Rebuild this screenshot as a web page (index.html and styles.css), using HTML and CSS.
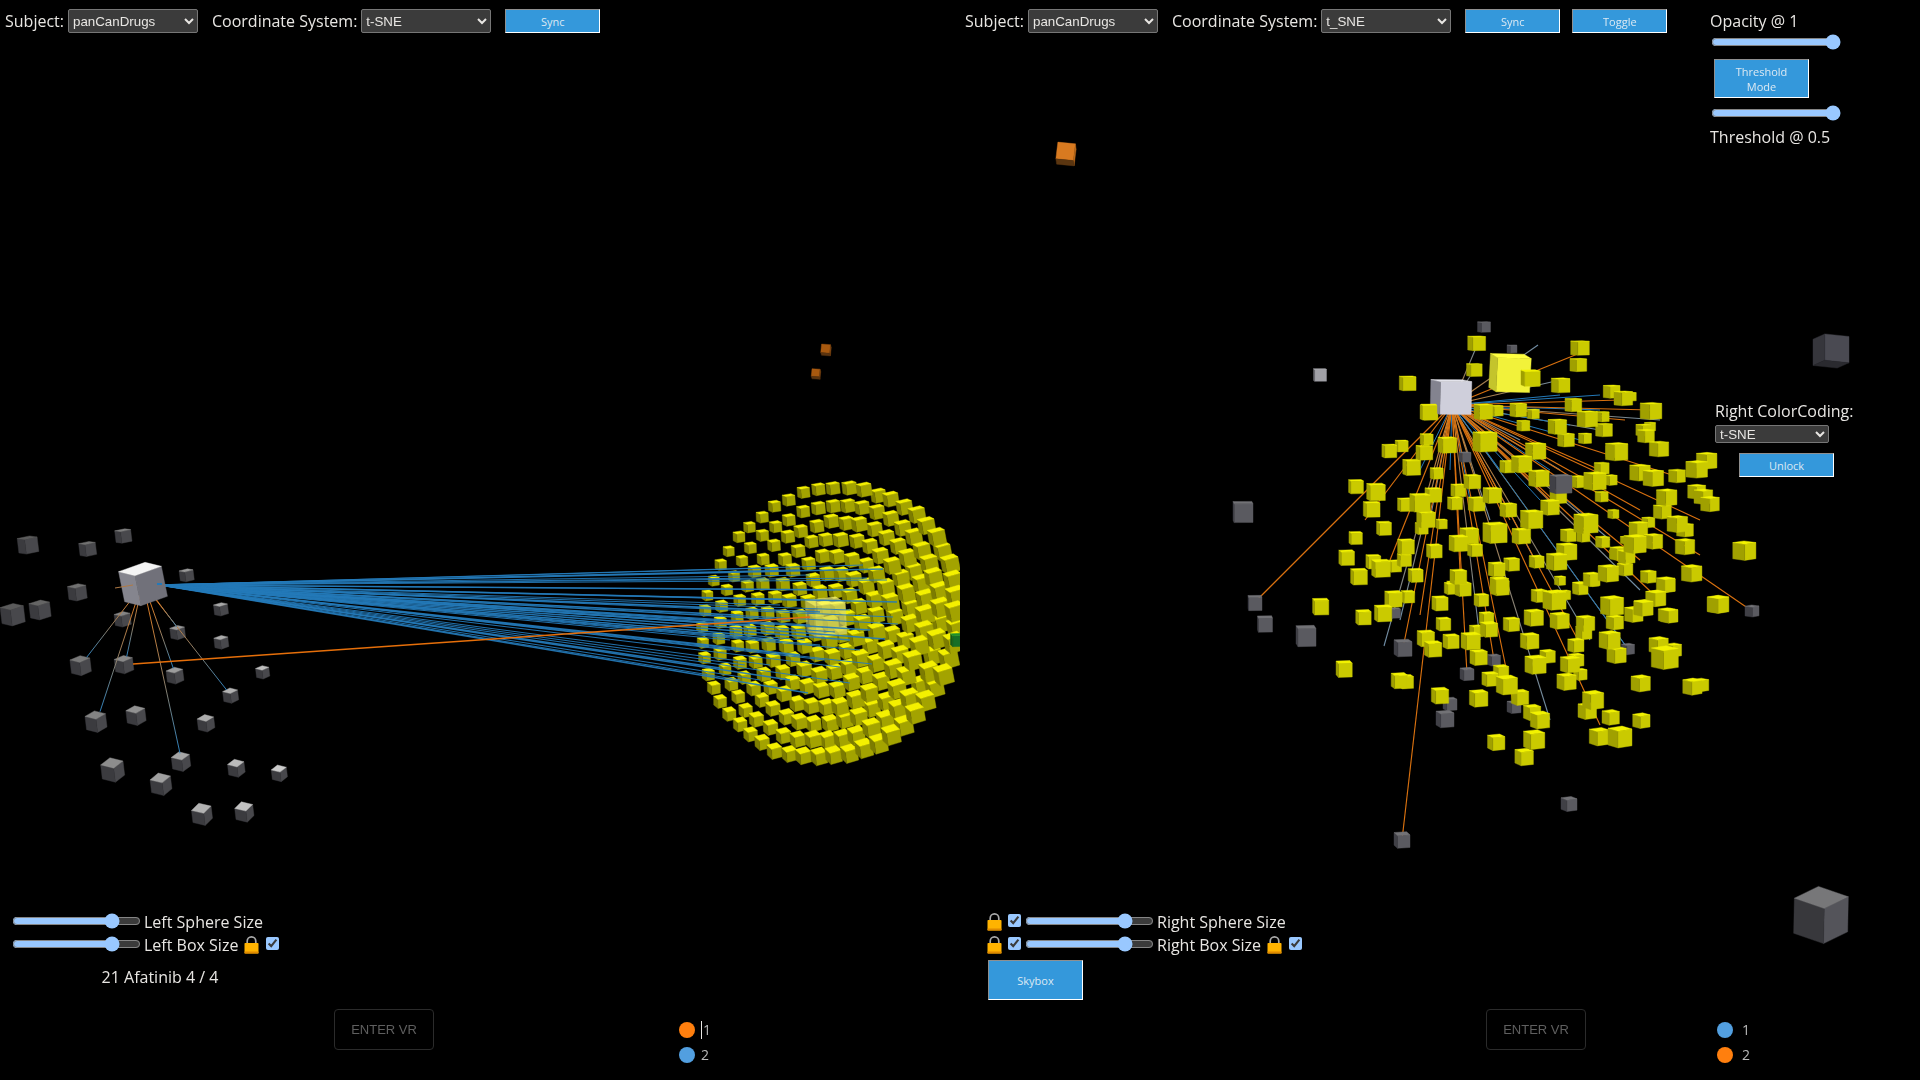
FILE: index.html
```html
<!DOCTYPE html>
<html lang="en">
<head>
<meta charset="utf-8">
<title>Embedding Viewer</title>
<link rel="stylesheet" href="styles.css">
</head>
<body>
<svg class="defs" width="0" height="0" aria-hidden="true">
  <symbol id="lock" viewBox="0 0 15 18">
    <path d="M3.2 8V5.2a4.3 4.3 0 0 1 8.6 0V8" fill="none" stroke="#a9a9a9" stroke-width="1.7"/>
    <rect x="0.5" y="7" width="14" height="10.6" rx="0.8" fill="#ffb300"/>
    <rect x="0.5" y="15.6" width="14" height="2" rx="0.6" fill="#e08a00"/>
  </symbol>
</svg>

<main class="pane pane-left">
  <canvas class="scene" id="sceneLeft" width="960" height="1080"></canvas>
  <div class="topbar">
    <label class="field">Subject:
      <select class="select"><option>panCanDrugs</option></select>
    </label>
    <label class="field">Coordinate System:
      <select class="select"><option>t-SNE</option></select>
    </label>
    <button class="btn">Sync</button>
  </div>
  <div class="bottom bottom-left">
    <div class="size-row"><input class="range" type="range" value="81"><span class="size-label">Left Sphere Size</span></div>
    <div class="size-row"><input class="range" type="range" value="81"><span class="size-label">Left Box Size</span><svg class="lock lock-after"><use href="#lock"/></svg><input class="check" type="checkbox" checked></div>
    <div class="drug">21 Afatinib 4 / 4</div>
  </div>
  <div class="vr vr-left">ENTER VR</div>
  <ul class="legend legend-left">
    <li class="legend-item"><span class="dot dot-orange"></span><span class="caret"></span>1</li>
    <li class="legend-item"><span class="dot dot-blue"></span>2</li>
  </ul>
</main>

<main class="pane pane-right">
  <canvas class="scene" id="sceneRight" width="960" height="1080"></canvas>
  <div class="topbar">
    <label class="field">Subject:
      <select class="select"><option>panCanDrugs</option></select>
    </label>
    <label class="field">Coordinate System:
      <select class="select"><option>t_SNE</option></select>
    </label>
    <button class="btn">Sync</button>
    <button class="btn btn-toggle">Toggle</button>
  </div>
  <aside class="opacity">
    <div class="side-label">Opacity @ 1</div>
    <input class="range range-side" type="range" value="100">
    <button class="btn btn-mode">Threshold Mode</button>
    <input class="range range-side" type="range" value="100">
    <div class="side-label side-threshold">Threshold @ 0.5</div>
  </aside>
  <aside class="coding">
    <div class="side-label">Right ColorCoding:</div>
    <select class="select select-small"><option>t-SNE</option></select>
    <button class="btn btn-unlock">Unlock</button>
  </aside>
  <div class="bottom bottom-right">
    <div class="size-row"><svg class="lock"><use href="#lock"/></svg><input class="check" type="checkbox" checked><input class="range" type="range" value="81"><span class="size-label">Right Sphere Size</span></div>
    <div class="size-row"><svg class="lock"><use href="#lock"/></svg><input class="check" type="checkbox" checked><input class="range" type="range" value="81"><span class="size-label">Right Box Size</span><svg class="lock lock-after"><use href="#lock"/></svg><input class="check" type="checkbox" checked></div>
    <button class="btn btn-skybox">Skybox</button>
  </div>
  <div class="vr vr-right">ENTER VR</div>
  <ul class="legend legend-right">
    <li class="legend-item"><span class="dot dot-blue"></span>1</li>
    <li class="legend-item"><span class="dot dot-orange"></span>2</li>
  </ul>
</main>
<script src="scene.js"></script>
</body>
</html>
```
FILE: styles.css
```css
:root { color-scheme: dark; }
* { box-sizing: border-box; }
html, body { margin: 0; height: 100%; background: #000; }
body {
  display: flex;
  width: 1920px;
  height: 1080px;
  overflow: hidden;
  font-family: "Open Sans", sans-serif;
  font-size: 16px;
  color: #e8e6e3;
}
.defs { position: absolute; }
.pane { position: relative; width: 960px; height: 1080px; overflow: hidden; }
.scene { position: absolute; inset: 0; display: block; }

.topbar {
  position: relative;
  display: flex;
  align-items: center;
  gap: 14px;
  height: 24px;
  margin-top: 9px;
  padding-left: 5px;
}
.field { display: flex; align-items: center; gap: 4px; }
.select {
  width: 130px;
  height: 24px;
  padding: 0;
  background-color: #3b3b3b;
  border: 1px solid #767676;
  border-radius: 2px;
  color: #e8e6e3;
  font-family: "Liberation Sans", sans-serif;
  font-size: 13.33px;
}
.select-small { width: 114px; height: 18px; }
.btn {
  width: 95px;
  height: 24px;
  padding: 0;
  background: #3498db;
  border: 1px solid;
  border-color: #8f8f8f #fff #fff #8f8f8f;
  color: #dce9f3;
  font-family: "Open Sans", sans-serif;
  font-size: 11px;
}
.btn-toggle { margin-left: -2px; }

.opacity {
  position: absolute;
  left: 750px;
  top: 10px;
  display: flex;
  flex-direction: column;
  align-items: flex-start;
}
.side-label { line-height: 22px; }
.range { width: 129px; height: 16px; margin: 2px; }
.range-side { margin: 2px 0 0 1px; width: 130px; }
.btn-mode { width: 95px; height: 39px; margin: 9px 0 0 4px; padding: 0 20px; line-height: 15px; }
.btn-mode + .range-side { margin-top: 7px; }
.side-threshold { margin-top: 5px; }

.coding {
  position: absolute;
  left: 755px;
  top: 400px;
  display: flex;
  flex-direction: column;
  align-items: flex-start;
}
.coding .select-small { margin-top: 3px; }
.btn-unlock { margin: 10px 0 0 24px; }

.bottom { position: absolute; top: 909px; display: flex; flex-direction: column; }
.bottom-left { left: 10px; width: 300px; }
.bottom-right { left: 27px; }
.size-row { display: flex; align-items: center; height: 23px; }
.size-label { line-height: 23px; margin-top: 4px; margin-left: 1px; }
.lock { width: 15px; height: 18px; flex: none; margin-top: 2px; }
.lock-after { margin-left: 6px; }
.check { width: 13px; height: 13px; margin: 0 0 0 7px; }
.lock-after + .check { margin: -1px 0 0 7px; }
.bottom-right .size-row .check:nth-child(2) { margin-top: 0; margin-right: 2px; margin-left: 6px; }
.drug {
  width: 300px;
  margin-top: 11px;
  text-align: center;
  line-height: 22px;
}
.btn-skybox { width: 95px; height: 40px; margin: 5px 0 0 1px; }

.vr {
  position: absolute;
  top: 1009px;
  width: 100px;
  height: 41px;
  display: flex;
  align-items: center;
  justify-content: center;
  border: 1px solid #2b2b2b;
  border-radius: 4px;
  color: #5f5f5f;
  font-family: "Liberation Sans", sans-serif;
  font-size: 13px;
}
.vr-left { left: 334px; }
.vr-right { left: 526px; }

.legend {
  position: absolute;
  top: 1017px;
  margin: 0;
  padding: 0;
  list-style: none;
  color: #b9b9b9;
  font-size: 14px;
}
.legend-left { left: 679px; }
.legend-right { left: 757px; }
.legend-item { display: flex; align-items: center; height: 25px; }
.dot { width: 16px; height: 16px; border-radius: 50%; margin-right: 6px; }
.dot-orange { background: #ff7f0e; }
.dot-blue { background: #529fe0; }
.legend-right .dot { margin-right: 9px; }
.caret { width: 1px; height: 18px; background: #e8e6e3; margin-right: 1px; }
```
FILE: scene.js
```js
(function () {
  function rng(seed) {
    return function () { seed = (seed * 16807) % 2147483647; return seed / 2147483647; };
  }

  function cube(g, x, y, s, o) {
    var a = o.a, p = o.p, r = o.r || 0, c = o.c;
    var ca = Math.cos(a), sa = Math.sin(a), cp = Math.cos(p), sp = Math.sin(p);
    var cr = Math.cos(r), sr = Math.sin(r);
    var k = s / (Math.abs(ca) + Math.abs(sa));
    function pr(X, Y, Z) {
      var x1 = X * ca + Z * sa;
      var z1 = -X * sa + Z * ca;
      var y1 = -Y * cp + z1 * sp;
      return [x + k * (x1 * cr - y1 * sr), y + k * (x1 * sr + y1 * cr)];
    }
    function face(pts, col) {
      g.fillStyle = col;
      g.strokeStyle = col;
      g.lineWidth = 0.4;
      g.beginPath();
      pts.forEach(function (q, i) {
        var v = pr(q[0], q[1], q[2]);
        if (i) g.lineTo(v[0], v[1]); else g.moveTo(v[0], v[1]);
      });
      g.closePath();
      g.fill();
      g.stroke();
    }
    var h = 0.5;
    face([[-h, h, h], [h, h, h], [h, -h, h], [-h, -h, h]], c.front);
    if (a > 0) face([[-h, h, -h], [-h, h, h], [-h, -h, h], [-h, -h, -h]], c.left);
    else face([[h, h, h], [h, h, -h], [h, -h, -h], [h, -h, h]], c.left);
    if (p > 0) face([[-h, h, -h], [h, h, -h], [h, h, h], [-h, h, h]], c.top);
    else face([[-h, -h, h], [h, -h, h], [h, -h, -h], [-h, -h, -h]], c.bottom || c.left);
  }

  function seg(g, x1, y1, x2, y2, w, c1, c2) {
    g.lineWidth = w;
    if (c2) {
      var gr = g.createLinearGradient(x1, y1, x2, y2);
      gr.addColorStop(0, c1);
      gr.addColorStop(0.55, "#8f7f68");
      gr.addColorStop(1, c2);
      g.strokeStyle = gr;
    } else g.strokeStyle = c1;
    g.beginPath();
    g.moveTo(x1, y1);
    g.lineTo(x2, y2);
    g.stroke();
  }

  var BLUE = "#2479b8";

  /* ---------- left scene ---------- */
  (function left() {
    var g = document.getElementById("sceneLeft").getContext("2d");
    var src = [160, 585];

    // gray cubes: x, y, size in 3x crop coordinates
    var grays = [[84,135,60],[263,147,50],[370,108,48],[232,277,55],[38,344,70],[120,330,62],[560,226,42],[368,358,48],
      [533,398,44],[663,328,42],[664,427,42],[242,497,60],[372,494,55],[525,527,50],[692,587,45],[788,517,40],[288,665,62],
      [408,647,57],[618,670,50],[338,810,68],[543,785,55],[483,853,62],[709,805,50],[838,820,46],[606,943,60],[733,936,55]];
    var fan = [[400,255],[260,472],[380,470],[300,635],[520,505],[680,570],[540,760],[530,380]];
    var fanStart = [[400,255],[410,278],[420,283],[415,285],[450,305],[468,300],[438,292],[470,300]];

    grays.forEach(function (q) {
      var x = q[0] / 3, y = q[1] / 3 + 500;
      var t = Math.round(0x52 + q[0] / 840 * 0x68 + (q[1] - 200) / 700 * 0x14);
      var top = "rgb(" + t + "," + t + "," + t + ")";
      cube(g, x, y, q[2] / 3, {
        a: 0.5 + (q[1] - 100) / 1800, p: 0.14 + (q[1] - 100) / 2000, r: -0.12,
        c: { top: top, left: "#3b3b3f", front: "#48484c" }
      });
    });

    fan.forEach(function (q, i) {
      var s = fanStart[i];
      seg(g, s[0] / 3, s[1] / 3 + 500, q[0] / 3, q[1] / 3 + 500, 1, "#e07a1c", "#2c80bd");
    });

    // yellow dome: concentric rings on a tilted oval
    var R = rng(4242), list = [];
    var cx = 830, cy = 623, major = 138, minor = 124, rings = 8;
    for (var k = 0; k <= rings; k++) {
      var n = k === 0 ? 1 : Math.round(k * 6.6);
      var off = R() * 6.28;
      for (var i = 0; i < n; i++) {
        var th = off + i / n * Math.PI * 2;
        var rr = k / rings + (R() - 0.5) * 0.02;
        var cs = Math.cos(th), sn = Math.sin(th);
        var ex = 0.47 * major * rr * sn + 0.88 * minor * rr * cs;
        var ey = -0.88 * major * rr * sn + 0.47 * minor * rr * cs;
        var tx = cx + ex + (R() - 0.5) * 2;
        var ty = cy + ey + (R() - 0.5) * 2;
        var u = ex / 130, v = ey / 140;
        list.push([tx, ty, 15 + 3.6 * u + 1.5 * v + (R() - 0.5), u, v]);
      }
    }
    list.sort(function (m, n2) { return m[2] - n2[2]; });
    list.forEach(function (q) {
      cube(g, q[0], q[1], q[2], {
        a: 0.38 - q[3] * 0.1, p: 0.34 + q[4] * 0.14, r: -0.1 - q[3] * 0.1,
        c: { top: "#f4f000", left: "#7c7c00", front: "#a3a300" }
      });
    });
    cube(g, 957, 640, 13, { a: 0.2, p: 0.2, c: { top: "#1f8f2f", left: "#125a1c", front: "#176f26" } });

    // translucent selected cube
    g.globalAlpha = 0.72;
    cube(g, 826, 617, 40, { a: 0.3, p: 0.2, r: -0.05, c: { top: "#fffb7a", left: "#b9b95c", front: "#d7d76a" } });
    g.globalAlpha = 1;

    // blue fan of edges
    var ends = [[883,569],[863,565],[867,578],[897,602],[893,617],[898,624],[885,639],[872,664],[840,667],[808,693],[850,683],
      [887,580],[860,590],[835,590],[810,575],[800,570],[770,568],[765,578],[800,600],[780,605],[760,610],[820,612],[850,610],
      [740,615],[790,620],[810,625],[835,632],[870,630],[860,650],[820,645],[780,640],[750,635],[730,640],[800,655],[770,665],
      [745,665],[720,668],[730,650],[760,680],[790,680],[740,680],[825,660],[850,640],[805,640],[775,625],[750,625],[735,625]];
    g.globalAlpha = 0.92;
    ends.forEach(function (e, i) {
      seg(g, src[0], src[1], e[0], e[1], i % 3 === 0 ? 1.5 : 1.1, BLUE);
    });
    g.globalAlpha = 1;
    seg(g, 133, 664, 810, 617, 1.3, "#e66f0a");

    // source cube
    cube(g, 143, 584, 43, { a: 0.5, p: 0.26, r: -0.2, c: { top: "#f4f4f4", left: "#85858e", front: "#71717a" } });
    seg(g, 133, 585, 115, 588, 1, "#b07a45");
    seg(g, 157, 584, 162, 584, 2, BLUE);

    // far orange cubes
    var dim = { a: -0.12, p: -0.3, r: 0.1, c: { front: "#a8590f", left: "#7c4410", bottom: "#5b3410" } };
    cube(g, 826, 350, 10, dim);
    cube(g, 816, 374, 9, dim);
  })();

  /* ---------- right scene (pane coordinates = page x - 960) ---------- */
  (function right() {
    var g = document.getElementById("sceneRight").getContext("2d");
    var YEL = { top: "#f2f200", left: "#a0a000", front: "#caca00" };
    var GRY = { top: "#727276", left: "#404046", front: "#5a5a60" };
    var O = 960;
    var sx = 1452 - O, sy = 405;

    var orange = [[1255,602],[1402,840],[1403,648],[1467,674],[1494,660],[1514,707],[1752,611],[1580,353],[1620,400],[1672,475],
      [1600,725],[1578,640],[1665,605],[1640,560],[1640,510],[1700,520],[1625,420],[1650,410],[1555,505],[1510,520],[1460,570],
      [1420,615],[1390,560],[1365,520],[1600,470],[1700,555]];
    var tan = [[1384,646],[1400,620],[1430,520],[1550,720],[1590,640],[1640,590],[1478,343],[1474,370],[1538,345],
      [1628,649],[1520,440],[1560,470],[1600,430],[1560,380],[1660,420],[1490,520],[1535,560],[1610,540],[1480,640]];
    var blue = [[1628,649],[1590,520],[1540,410],[1560,395],[1600,395],[1580,440],[1550,470],[1540,500],[1450,470],[1420,470],
      [1500,470],[1470,500],[1600,410],[1570,425]];
    tan.forEach(function (t) { seg(g, sx, sy, t[0] - O, t[1], 1.1, "#d8801f", "#6f8ea8"); });
    blue.forEach(function (t) { seg(g, sx, sy, t[0] - O, t[1], 1, BLUE); });
    orange.forEach(function (t) { seg(g, sx, sy, t[0] - O, t[1], 1.15, "#d9710f"); });

    var items = [];
    function add(px, py, s, col) { items.push([px, py, s, col]); }

    // crop A: origin 1220,310 (3x)
    [[770,100,48],[763,180,42],[1080,114,50],[1075,165,45],[930,205,55],[563,220,45],[1022,226,50],[1175,245,45],[627,307,48],
     [790,305,50],[1060,285,45],[895,300,45],[940,312,32],[830,302,35],[1102,327,55],[1148,320,35],[1012,350,50],[1152,360,45],
     [910,347,35],[1038,390,45],[1095,385,35],[795,395,65],[682,405,50],[620,388,35],[508,423,40],[545,408,35],[613,428,45],
     [947,423,55],[1180,425,40],[575,472,48],[650,490,35],[905,462,55],[862,470,40],[957,505,55],[1145,475,40],[1125,513,60],
     [1075,515,40],[1172,510,35],[757,515,45],[408,530,40],[468,546,50],[715,541,40],[817,556,50],[555,584,40],[455,598,45],
     [600,578,55],[640,555,45],[705,580,40],[770,582,45],[865,600,45],[1145,560,35],[1015,560,45],[990,592,50],[935,628,60],
     [1180,612,30],[1098,640,65],[492,655,40],[618,628,50],[665,642,30],[605,655,35],[748,677,50],[825,668,65],[904,678,50],
     [1045,676,42],[1090,680,35],[407,684,36],[1148,696,38],[558,710,45],[715,700,50],[643,723,42],[765,720,40],[1040,725,55],
     [950,755,40],[1010,755,55],[380,743,42],[460,755,40],[553,750,38],[483,775,50],[525,768,35],[830,778,45],[875,763,42],
     [1185,733,30],[417,800,45],[587,796,40],[715,800,45],[1020,812,30],[1115,808,45],[1165,790,55],[838,825,50],[700,830,35],[1075,830,30]
    ].forEach(function (q) { add(1220 + q[0] / 3, 310 + q[1] / 3, q[2] / 3 * 1.12, YEL); });

    // crop B: origin 1220,580 (2.9x / 3y)
    [[292,80,42],[503,57,45],[545,50,35],[416,112,40],[473,100,45],[638,70,42],[758,60,38],[925,47,40],[970,60,60],[1000,45,30],
     [1137,77,60],[1265,55,50],[1445,73,55],[1295,15,45],[812,22,48],[705,27,42],[670,25,35],[1045,25,40],[1083,5,30],[648,132,38],
     [845,133,42],[1200,103,48],[1228,84,50],[1303,107,45],[910,113,50],[985,122,50],[1145,127,45],[1060,130,48],[773,115,38],
     [780,148,45],[743,153,35],[898,183,48],[1130,180,55],[1055,158,42],[597,175,45],[618,207,45],[670,184,42],[727,183,50],
     [750,232,45],[1032,196,42],[1150,225,50],[1272,195,50],[1315,210,42],[1290,233,70],[950,229,40],[915,254,55],[1015,253,50],
     [1033,240,40],[1045,283,35],[815,275,40],[783,297,42],[832,315,55],[360,267,42],[520,302,42],[540,305,38],[1005,305,50],
     [1220,310,50],[1370,320,50],[1395,315,40],[638,347,45],[750,355,48],[870,352,45],[1082,360,55],[1065,393,48],[905,397,45],
     [928,420,50],[1133,412,45],[1222,422,45],[1100,470,52],[1160,471,62],[801,487,45],[911,479,55],[882,531,48]
    ].forEach(function (q) { add(1220 + q[0] / 2.9, 580 + q[1] / 3, q[2] / 2.9 * 1.12, YEL); });

    // crop C: origin 1500,380 (3x)
    [[333,35,38],[370,55,50],[392,50,30],[453,93,58],[430,150,40],[438,168,45],[450,140,30],[477,207,52],[350,215,60],[620,242,55],
     [590,268,58],[531,288,45],[420,278,55],[460,294,55],[500,352,55],[590,335,48],[610,350,50],[630,372,50],[487,395,48],[532,432,55],
     [555,450,45],[445,427,35],[415,447,50],[405,492,60],[460,484,50],[375,480,25],[555,500,52],[733,512,62],[375,568,42],[355,520,45],
     [380,530,45],[445,590,42],[497,614,50],[575,580,55],[465,655,50],[652,673,55],[430,683,50],[500,705,45],[402,702,45]
    ].forEach(function (q) { add(1500 + q[0] / 3, 380 + q[1] / 3, q[2] / 3 * 1.12, YEL); });

    // gray cubes, page coordinates
    [[1484,327,13],[1512,349,10],[1243,512,20],[1465,457,12],[1255,603,14],[1265,624,15],[1306,636,20],[1395,613,11],[1403,648,18],
     [1467,674,14],[1494,660,13],[1450,704,14],[1514,707,14],[1445,719,18],[1569,804,16],[1402,840,16],[1628,649,13],[1752,611,14]
    ].forEach(function (q) { add(q[0], q[1], q[2], GRY); });

    items.sort(function (m, n) { return m[2] - n[2]; });
    items.forEach(function (q) {
      cube(g, q[0] - O, q[1], q[2], {
        a: Math.max(0.06, 0.1 + (q[0] - 1300) / 620), p: Math.max(0.06, 0.08 + (q[1] - 400) / 2500), c: q[3]
      });
    });

    // feature cubes
    cube(g, 1320 - O, 375, 13, { a: 0.1, p: 0.06, c: { top: "#bdbdc2", left: "#6f6f75", front: "#a0a0a6" } });
    cube(g, 1510 - O, 373, 41, { a: 0.22, p: 0.12, r: 0.05, c: { top: "#ffff40", left: "#c4c42c", front: "#f2f23a" } });
    cube(g, 1530 - O, 378, 18, { a: 0.25, p: 0.1, c: YEL });
    cube(g, 1451 - O, 397, 41, { a: 0.3, p: 0.06, r: 0.02, c: { top: "#e4e4ec", left: "#83838f", front: "#cfcfdb" } });
    cube(g, 1429 - O, 412, 16, { a: 0.1, p: 0.08, c: YEL });
    cube(g, 1561 - O, 484, 22, { a: 0.35, p: 0.1, c: GRY });
    cube(g, 1831 - O, 351, 36, { a: 0.45, p: -0.22, c: { front: "#4a4a52", left: "#36363c", bottom: "#2a2a2f" } });
    cube(g, 1821 - O, 915, 54, { a: 0.9, p: 0.42, r: 0.02, c: { top: "#777779", left: "#38383c", front: "#54545a" } });
    cube(g, 1066 - O, 154, 19, { a: -0.08, p: -0.3, r: 0.12, c: { front: "#d87a20", left: "#b8681a", bottom: "#5a3510" } });
  })();
})();
```
